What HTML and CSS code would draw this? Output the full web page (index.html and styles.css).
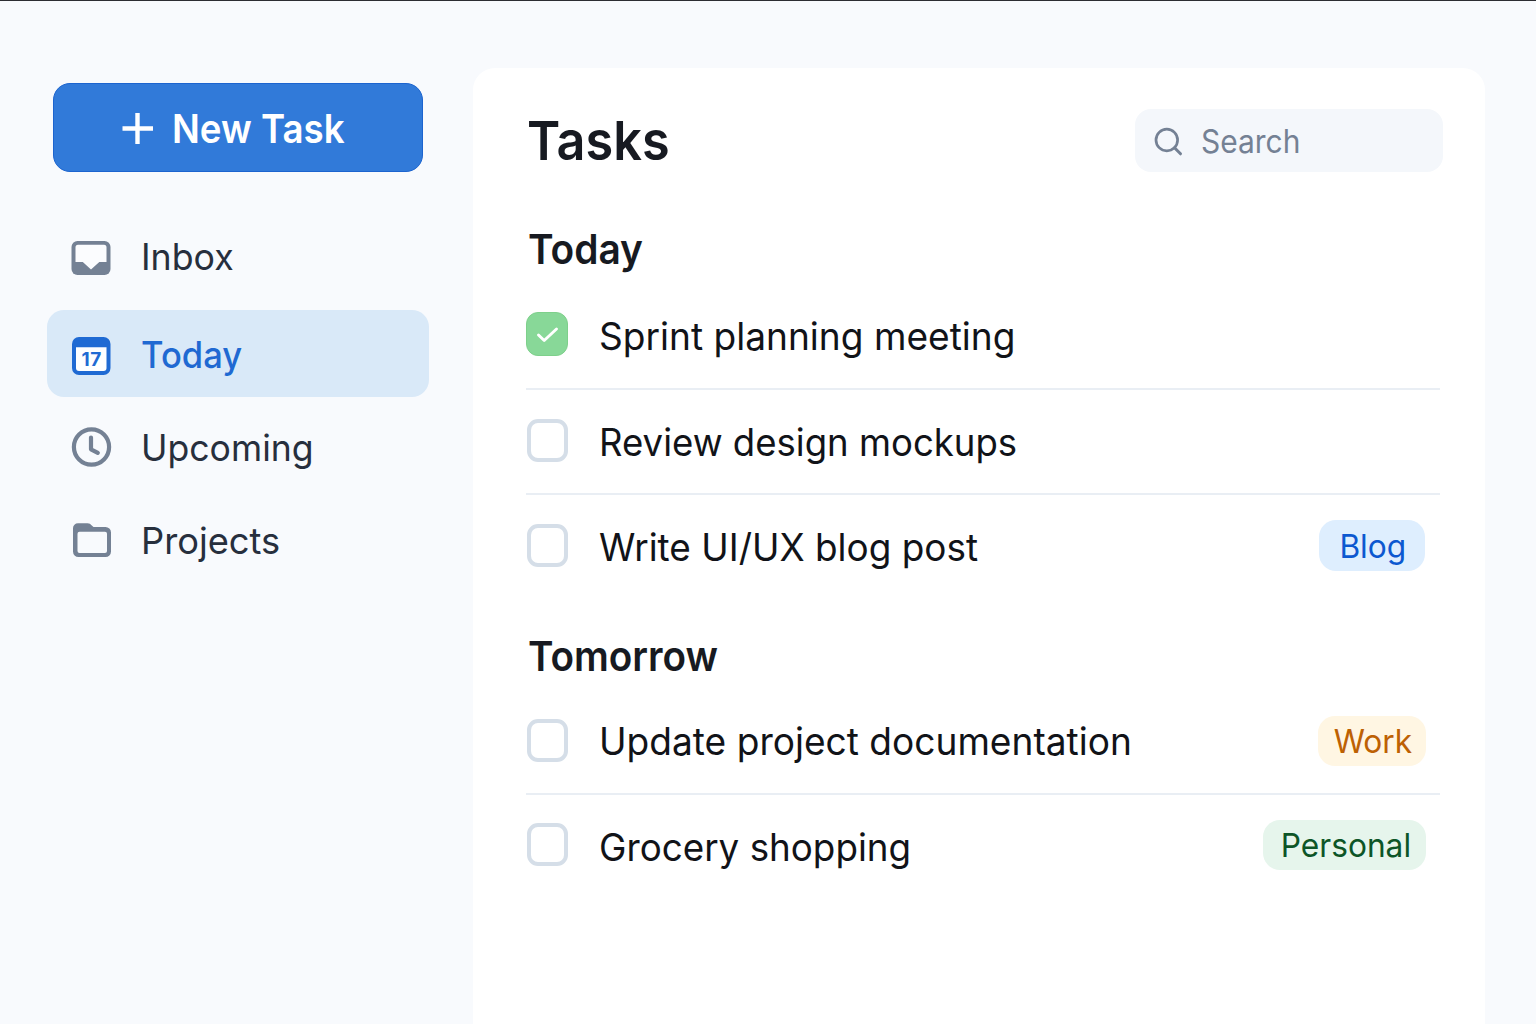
FILE: index.html
```html
<!DOCTYPE html>
<html lang="en">
<head>
<meta charset="utf-8">
<title>Tasks</title>
<link rel="stylesheet" href="styles.css">
</head>
<body>
<div class="app">
  <aside class="sidebar">
    <button class="new-task">
      <svg class="plus" width="32" height="32" viewBox="0 0 32 32"><path d="M15.500 0v31M.5 15.500h30.500" fill="none" stroke="#fff" stroke-width="4.400"/></svg>
      <span class="new-label">New Task</span>
    </button>
    <nav class="nav">
      <a class="nav-item">
        <svg class="icon" width="42" height="42" viewBox="0 0 42 42"><rect x="1.500" y="4" width="39" height="34" rx="6" fill="#748194"/><path d="M8 7.700h26a2.500 2.500 0 0 1 2.500 2.500V25h-7.200l-8.300 7.500-8.200-7.500H5.500V10.200A2.500 2.500 0 0 1 8 7.700z" fill="#fbfcfe"/></svg>
        <span class="inbox">Inbox</span>
      </a>
      <a class="nav-item active">
        <svg class="icon" width="42" height="42" viewBox="0 0 42 42"><rect x="2" y="3" width="38.500" height="38" rx="7" fill="#1f6ad3"/><path d="M6 13.300h30.500V34a3 3 0 0 1-3 3H9a3 3 0 0 1-3-3z" fill="#fdfeff"/><text class="date" x="21.800" y="32" text-anchor="middle">17</text></svg>
        <span class="today">Today</span>
      </a>
      <a class="nav-item">
        <svg class="icon" width="42" height="42" viewBox="0 0 42 42"><circle cx="21.500" cy="20" r="17.600" fill="none" stroke="#748194" stroke-width="4.200"/><path d="M21 10.500v11.800l6.800 3.500" fill="none" stroke="#748194" stroke-width="4.200" stroke-linecap="round" stroke-linejoin="round"/></svg>
        <span class="upcoming">Upcoming</span>
      </a>
      <a class="nav-item">
        <svg class="icon" width="42" height="42" viewBox="0 0 42 42"><path fill-rule="evenodd" d="M8 3.200h9.500c2 0 3 .8 4 2l2 1.800h12a5.500 5.500 0 0 1 5.500 5.500v19a5.500 5.500 0 0 1-5.500 5.500H8.500A5.500 5.500 0 0 1 3 31.500V8.200a5 5 0 0 1 5-5zM9.500 11.700a2 2 0 0 0-2 2V31a2 2 0 0 0 2 2h25.500a2 2 0 0 0 2-2V13.700a2 2 0 0 0-2-2z" fill="#748194"/></svg>
        <span class="projects">Projects</span>
      </a>
    </nav>
  </aside>
  <main class="panel">
    <header class="head">
      <h1>Tasks</h1>
      <div class="search">
        <svg width="30" height="30" viewBox="0 0 30 30"><circle cx="12.800" cy="13" r="10.800" fill="none" stroke="#748194" stroke-width="2.700"/><path d="M20.500 20.800l6 6" stroke="#748194" stroke-width="3" stroke-linecap="round"/></svg>
        <span class="placeholder">Search</span>
      </div>
    </header>
    <section class="group">
      <h2 class="h-today">Today</h2>
      <ul>
        <li><span class="box done"><svg width="24" height="18" viewBox="0 0 24 18"><path d="M3.500 10l5.700 5.500L21.500 4" fill="none" stroke="#fff" stroke-width="2.900" stroke-linecap="round" stroke-linejoin="round"/></svg></span><span class="label t1">Sprint planning meeting</span></li>
        <li><span class="box"></span><span class="label t2">Review design mockups</span></li>
        <li><span class="box"></span><span class="label t3">Write UI/UX blog post</span><span class="tag blog"><span>Blog</span></span></li>
      </ul>
    </section>
    <section class="group">
      <h2 class="h-tomorrow">Tomorrow</h2>
      <ul>
        <li><span class="box"></span><span class="label t4">Update project documentation</span><span class="tag work"><span>Work</span></span></li>
        <li><span class="box last"></span><span class="label t5">Grocery shopping</span><span class="tag personal"><span>Personal</span></span></li>
      </ul>
    </section>
  </main>
</div>
</body>
</html>
```
FILE: styles.css
```css
* { box-sizing: border-box; }
body {
  margin: 0;
  height: 1024px;
  overflow: hidden;
  background: #f8fafd;
  border-top: 1px solid #2c2d32;
  font-family: Inter, "Liberation Sans", sans-serif;
  color: #171a21;
}
h1, h2, ul { margin: 0; padding: 0; }
ul { list-style: none; }
span, h1, h2 { white-space: nowrap; }
svg { flex: none; display: block; }

/* slightly condensed lettering */
h1, h2, .label, .new-label, .placeholder, .nav-item span { transform-origin: 0 50%; }

.app { display: flex; height: 1023px; }

.sidebar { width: 473px; flex: none; padding: 81.500px 44px 0 47px; }
.new-task {
  display: flex;
  align-items: center;
  width: 370px;
  height: 89px;
  margin: 0 0 42.500px 6px;
  padding: 3px 0 0 68px;
  gap: 18px;
  border: 1px solid #1c64cf;
  border-radius: 17px;
  background: #317ad9;
  color: #fff;
  font: 600 40px/1 Inter, "Liberation Sans", sans-serif;
}
.new-label { transform: scaleX(.917); }
.nav-item {
  display: flex;
  align-items: center;
  height: 87px;
  padding-left: 23px;
  gap: 29px;
  border-radius: 17px;
  font-size: 37px;
  font-weight: 400;
  line-height: 1;
  color: #272f3d;
  margin-bottom: 6px;
}
.nav-item:first-child { margin-bottom: 9px; }
.nav-item.active {
  padding-top: 2px;
  background: #d9e9f8;
  color: #1f69d2;
  font-weight: 500;
  margin-bottom: 7px;
}
.nav-item .inbox { transform: scaleX(.966); margin-top: -2px; }
.nav-item .today { transform: scaleX(.935); }
.nav-item .upcoming { transform: scaleX(.962); }
.nav-item .projects { transform: scaleX(.98); }
.date { font: 700 19px Inter, sans-serif; fill: #1f6ad3; letter-spacing: .8px; }

.panel {
  width: 1012px;
  margin-top: 67px;
  padding: 41px 42px 0 53px;
  border-radius: 22px 22px 0 0;
  background: #fff;
}
.head { display: flex; justify-content: space-between; height: 63px; padding-left: 1px; }
h1 { font-size: 54px; font-weight: 600; line-height: 63px; transform: scaleX(.934); }
.search {
  display: flex;
  align-items: center;
  width: 308px;
  padding: 2px 0 0 19px;
  gap: 16.500px;
  border-radius: 16px;
  background: #f4f7fb;
  color: #748194;
  font-size: 32px;
}
.placeholder { transform: scaleX(.936); }
.group { margin-right: 3px; }
h2 {
  height: 113px;
  padding: 52px 0 0 2px;
  font-size: 41px;
  font-weight: 600;
  line-height: 50px;
  transform: scaleX(.948);
}
.h-tomorrow { height: 90px; padding-top: 31px; transform: scaleX(.943); }
li { display: flex; align-items: center; height: 105px; border-bottom: 2px solid #e9eef4; }
li:last-child { border-bottom-color: transparent; }
.box {
  flex: none;
  width: 41px;
  height: 43px;
  margin: -3px 31px 0 1px;
  border: 4px solid #d5dee8;
  border-radius: 11px;
}
.box.last { margin-top: -5px; }
.box.done {
  display: flex;
  align-items: center;
  justify-content: center;
  width: 42px;
  height: 44px;
  margin: -5px 31px 0 0;
  border: 1px solid #7ed08b;
  border-radius: 12px;
  background: #88d898;
}
.label { font-size: 38px; line-height: 39px; color: #111318; }
.t1 { transform: scaleX(.976); }
.t2 { transform: scaleX(.962); margin-top: 2px; }
.t3 { transform: scaleX(.972); margin-top: 2px; }
.t4 { transform: scaleX(.976); }
.t5 { transform: scaleX(.968); margin-top: 1px; }
.tag {
  display: flex;
  align-items: center;
  justify-content: center;
  margin: -2px 14px 0 auto;
  height: 50px;
  border-radius: 17px;
  font-size: 33px;
}
.tag span { transform: scaleX(.96); }
.blog { width: 106px; height: 51px; margin: -3px 15px 0 auto; padding: 2px 0 0 1px; background: #deeefe; color: #0c58d0; }
.work { width: 108px; margin-top: -1px; padding-left: 2px; background: #fff6e3; color: #bd6103; }
.personal { width: 163px; margin-top: -4px; padding: 1px 0 0 2px; background: #e6f5ec; color: #0d5527; }
```
